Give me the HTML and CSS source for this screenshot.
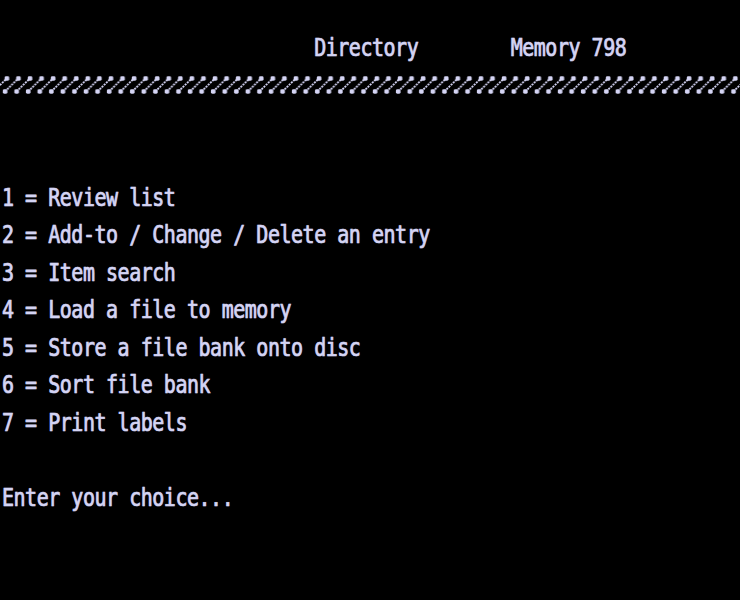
FILE: index.html
```html
<!DOCTYPE html>
<html>
<head>
<meta charset="utf-8">
<link rel="stylesheet" href="styles.css">
</head>
<body>
<div class="screen">
  <div class="row title"><span class="txt">                           Directory        Memory 798</span></div>
  <div class="banner"><svg class="chain" width="740" height="22" viewBox="0 0 740 22" xmlns="http://www.w3.org/2000/svg"><defs><pattern id="chain" x="0" y="0" width="11.5625" height="22" patternUnits="userSpaceOnUse"><line x1="5" y1="16.5" x2="18.3" y2="3.5" stroke="#d4d4f4" stroke-width="1.8" stroke-dasharray="2 1"/><line x1="-6.56" y1="16.5" x2="6.74" y2="3.5" stroke="#d4d4f4" stroke-width="1.8" stroke-dasharray="2 1"/><rect x="4.6" y="1.3" width="4.6" height="4.4" rx="1.4" fill="#d4d4f4"/><rect x="2.8" y="14.3" width="4.6" height="4.4" rx="1.4" fill="#d4d4f4"/></pattern></defs><rect x="0" y="0" width="740" height="22" fill="url(#chain)"/></svg></div>
  <div class="menu">
    <div class="row item"><span class="txt">1 = Review list</span></div>
    <div class="row item"><span class="txt">2 = Add-to / Change / Delete an entry</span></div>
    <div class="row item"><span class="txt">3 = Item search</span></div>
    <div class="row item"><span class="txt">4 = Load a file to memory</span></div>
    <div class="row item"><span class="txt">5 = Store a file bank onto disc</span></div>
    <div class="row item"><span class="txt">6 = Sort file bank</span></div>
    <div class="row item"><span class="txt">7 = Print labels</span></div>
  </div>
  <div class="row prompt"><span class="txt">Enter your choice...</span></div>
</div>
</body>
</html>
```
FILE: styles.css
```css
html, body {
  margin: 0;
  padding: 0;
  background: #000;
}
body {
  width: 740px;
  height: 600px;
  overflow: hidden;
}
.screen {
  display: flex;
  flex-direction: column;
  padding-top: 37.5px;
  padding-left: 2px;
  color: #d4d4f4;
  font-family: "DejaVu Sans Mono", "Liberation Mono", monospace;
  font-size: 20px;
  font-weight: normal;
  letter-spacing: -0.48px;
}
.row {
  height: 18.75px;
  line-height: 18.75px;
  white-space: pre;
  overflow: visible;
}
.txt {
  display: inline-block;
  transform-origin: 0 0;
  transform: translateY(-1.5px) scaleY(1.22);
  -webkit-text-stroke: 0.5px #d4d4f4;
  text-shadow: 0 0 1px rgba(212, 212, 244, 0.6);
}
.banner {
  height: 18.75px;
  margin-top: 18.75px;
  margin-left: -2px;
  overflow: visible;
}
.chain {
  display: block;
}
.menu {
  display: flex;
  flex-direction: column;
  gap: 18.75px;
  margin-top: 93.75px;
}
.prompt {
  margin-top: 56.25px;
}
```
